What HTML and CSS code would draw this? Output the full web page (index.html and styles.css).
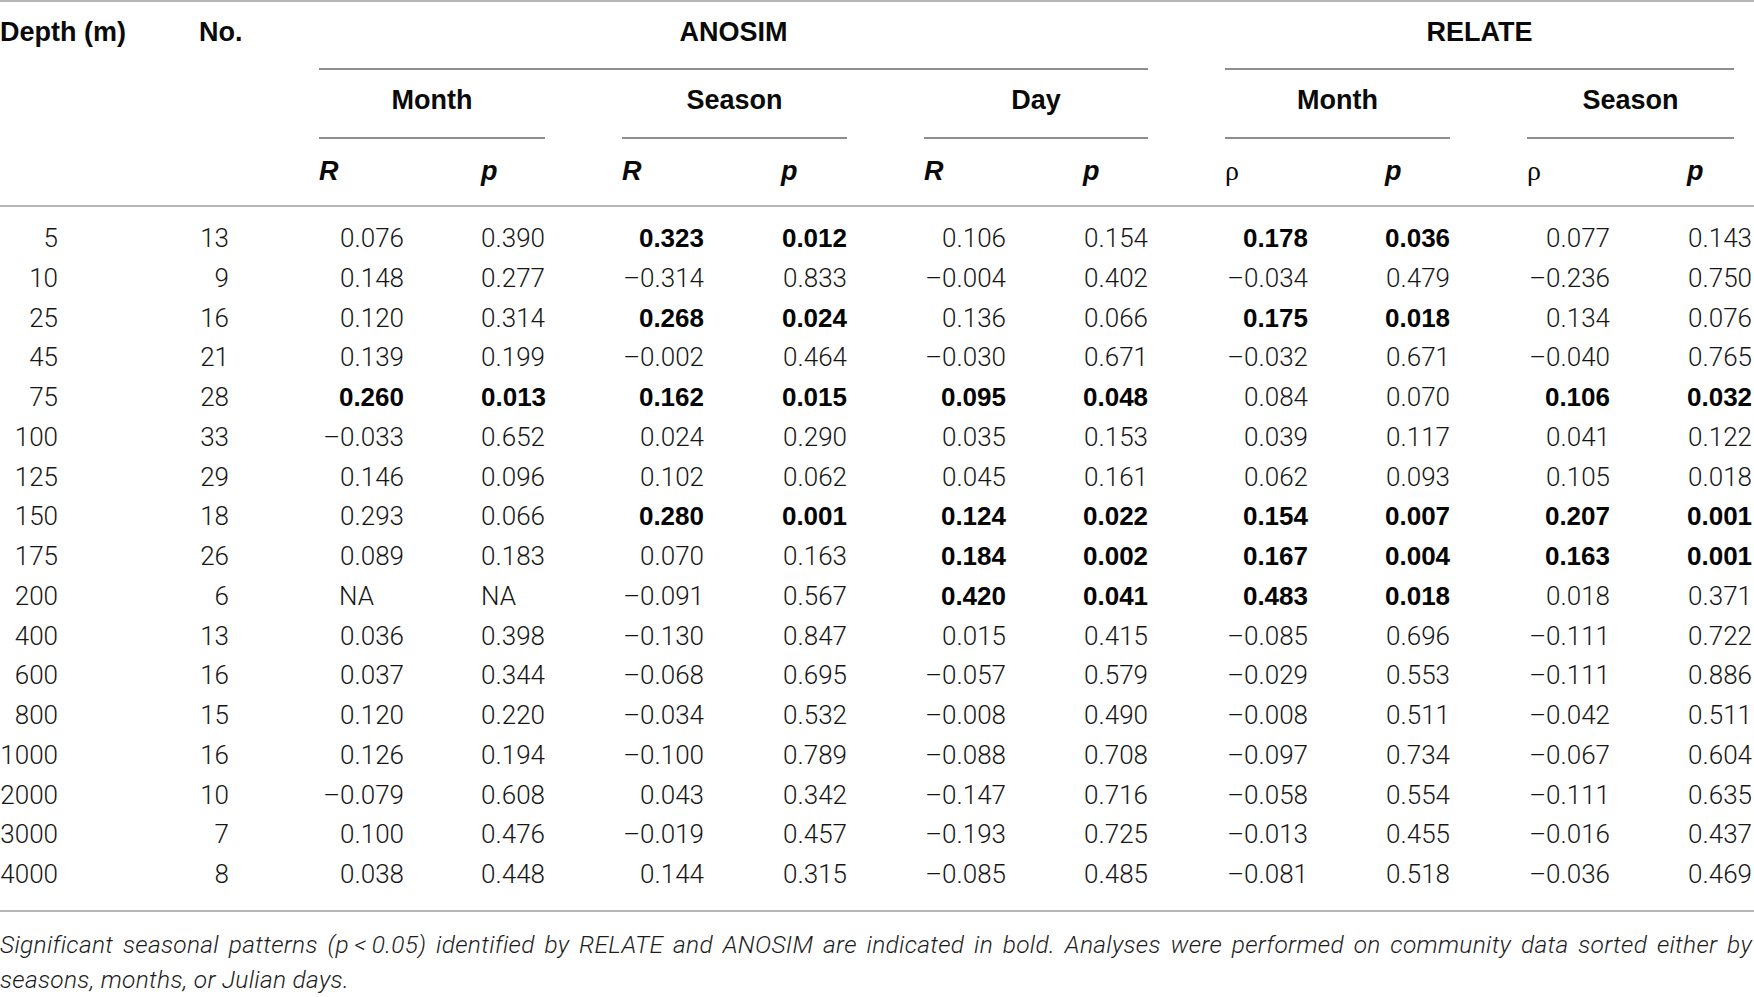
FILE: index.html
```html
<!DOCTYPE html>
<html lang="en">
<head>
<meta charset="utf-8">
<title>ANOSIM and RELATE results</title>
<link rel="stylesheet" href="styles.css">
</head>
<body>
<div class="table">
  <div class="grid head">
    <div class="rule r1"></div>
    <div class="hd row2 c1">Depth (m)</div>
    <div class="hd row2 c2">No.</div>
    <div class="hd row2 grp g-anosim">ANOSIM</div>
    <div class="hd row2 grp g-relate">RELATE</div>
    <div class="gline row3 g-anosim"></div>
    <div class="gline row3 g-relate trim"></div>
    <div class="hd row4 grp s1">Month</div>
    <div class="hd row4 grp s2">Season</div>
    <div class="hd row4 grp s3">Day</div>
    <div class="hd row4 grp s4">Month</div>
    <div class="hd row4 grp s5">Season</div>
    <div class="gline row5 s1"></div>
    <div class="gline row5 s2"></div>
    <div class="gline row5 s3"></div>
    <div class="gline row5 s4"></div>
    <div class="gline row5 s5 trim"></div>
    <div class="hd row6 it c3">R</div>
    <div class="hd row6 it c4">p</div>
    <div class="hd row6 it c5">R</div>
    <div class="hd row6 it c6">p</div>
    <div class="hd row6 it c7">R</div>
    <div class="hd row6 it c8">p</div>
    <div class="hd row6 rho c9">ρ</div>
    <div class="hd row6 it c10">p</div>
    <div class="hd row6 rho c11">ρ</div>
    <div class="hd row6 it c12">p</div>
    <div class="rule r7"></div>
  </div>

  <div class="grid body">
    <div class="depth">5</div><div class="no">13</div><div>0.076</div><div>0.390</div><div class="b">0.323</div><div class="b">0.012</div><div>0.106</div><div>0.154</div><div class="b">0.178</div><div class="b">0.036</div><div>0.077</div><div class="last">0.143</div>
    <div class="depth">10</div><div class="no">9</div><div>0.148</div><div>0.277</div><div>–0.314</div><div>0.833</div><div>–0.004</div><div>0.402</div><div>–0.034</div><div>0.479</div><div>–0.236</div><div class="last">0.750</div>
    <div class="depth">25</div><div class="no">16</div><div>0.120</div><div>0.314</div><div class="b">0.268</div><div class="b">0.024</div><div>0.136</div><div>0.066</div><div class="b">0.175</div><div class="b">0.018</div><div>0.134</div><div class="last">0.076</div>
    <div class="depth">45</div><div class="no">21</div><div>0.139</div><div>0.199</div><div>–0.002</div><div>0.464</div><div>–0.030</div><div>0.671</div><div>–0.032</div><div>0.671</div><div>–0.040</div><div class="last">0.765</div>
    <div class="depth">75</div><div class="no">28</div><div class="b">0.260</div><div class="b">0.013</div><div class="b">0.162</div><div class="b">0.015</div><div class="b">0.095</div><div class="b">0.048</div><div>0.084</div><div>0.070</div><div class="b">0.106</div><div class="b last">0.032</div>
    <div class="depth">100</div><div class="no">33</div><div>–0.033</div><div>0.652</div><div>0.024</div><div>0.290</div><div>0.035</div><div>0.153</div><div>0.039</div><div>0.117</div><div>0.041</div><div class="last">0.122</div>
    <div class="depth">125</div><div class="no">29</div><div>0.146</div><div>0.096</div><div>0.102</div><div>0.062</div><div>0.045</div><div>0.161</div><div>0.062</div><div>0.093</div><div>0.105</div><div class="last">0.018</div>
    <div class="depth">150</div><div class="no">18</div><div>0.293</div><div>0.066</div><div class="b">0.280</div><div class="b">0.001</div><div class="b">0.124</div><div class="b">0.022</div><div class="b">0.154</div><div class="b">0.007</div><div class="b">0.207</div><div class="b last">0.001</div>
    <div class="depth">175</div><div class="no">26</div><div>0.089</div><div>0.183</div><div>0.070</div><div>0.163</div><div class="b">0.184</div><div class="b">0.002</div><div class="b">0.167</div><div class="b">0.004</div><div class="b">0.163</div><div class="b last">0.001</div>
    <div class="depth">200</div><div class="no">6</div><div><span class="na">NA</span></div><div><span class="na">NA</span></div><div>–0.091</div><div>0.567</div><div class="b">0.420</div><div class="b">0.041</div><div class="b">0.483</div><div class="b">0.018</div><div>0.018</div><div class="last">0.371</div>
    <div class="depth">400</div><div class="no">13</div><div>0.036</div><div>0.398</div><div>–0.130</div><div>0.847</div><div>0.015</div><div>0.415</div><div>–0.085</div><div>0.696</div><div>–0.111</div><div class="last">0.722</div>
    <div class="depth">600</div><div class="no">16</div><div>0.037</div><div>0.344</div><div>–0.068</div><div>0.695</div><div>–0.057</div><div>0.579</div><div>–0.029</div><div>0.553</div><div>–0.111</div><div class="last">0.886</div>
    <div class="depth">800</div><div class="no">15</div><div>0.120</div><div>0.220</div><div>–0.034</div><div>0.532</div><div>–0.008</div><div>0.490</div><div>–0.008</div><div>0.511</div><div>–0.042</div><div class="last">0.511</div>
    <div class="depth">1000</div><div class="no">16</div><div>0.126</div><div>0.194</div><div>–0.100</div><div>0.789</div><div>–0.088</div><div>0.708</div><div>–0.097</div><div>0.734</div><div>–0.067</div><div class="last">0.604</div>
    <div class="depth">2000</div><div class="no">10</div><div>–0.079</div><div>0.608</div><div>0.043</div><div>0.342</div><div>–0.147</div><div>0.716</div><div>–0.058</div><div>0.554</div><div>–0.111</div><div class="last">0.635</div>
    <div class="depth">3000</div><div class="no">7</div><div>0.100</div><div>0.476</div><div>–0.019</div><div>0.457</div><div>–0.193</div><div>0.725</div><div>–0.013</div><div>0.455</div><div>–0.016</div><div class="last">0.437</div>
    <div class="depth">4000</div><div class="no">8</div><div>0.038</div><div>0.448</div><div>0.144</div><div>0.315</div><div>–0.085</div><div>0.485</div><div>–0.081</div><div>0.518</div><div>–0.036</div><div class="last">0.469</div>
  </div>

  <p class="caption"><span class="cap-line">Significant seasonal patterns (p&thinsp;&lt;&thinsp;0.05) identified by RELATE and ANOSIM are indicated in bold. Analyses were performed on community data sorted either by</span> seasons, months, or Julian days.</p>
</div>
</body>
</html>
```

FILE: styles.css
```css
html, body {
  margin: 0;
  padding: 0;
  background: #ffffff;
}

body {
  color: #161616;
  font-family: Roboto, "Liberation Sans", sans-serif;
  width: 1754px;
  overflow: hidden;
}

.grid {
  display: grid;
  grid-template-columns: 122px 43px 85px 64px 82px 66px 82px 65px 83px 65px 83px 67px;
  column-gap: 77px;
}

/* ---------- header ---------- */
.head {
  grid-template-rows: 2px 66px 2px 67px 2px 66px 2px;
}

.rule {
  grid-column: 1 / -1;
  background: #b6b6b6;
}
.r1 { grid-row: 1; }
.r7 { grid-row: 7; }

.gline {
  background: #8e8e8e;
  height: 2px;
}
.gline.trim { margin-right: 20px; }

.hd {
  font-family: "Liberation Sans", Arial, sans-serif;
  font-weight: 700;
  font-size: 27px;
  line-height: 30px;
  padding-top: 15px;
  color: #0a0a0a;
  white-space: nowrap;
}
.grp { text-align: center; }
.grp.g-relate, .grp.s5 { padding-right: 20px; }

.row2 { grid-row: 2; }
.row3 { grid-row: 3; }
.row4 { grid-row: 4; }
.row5 { grid-row: 5; }
.row6 { grid-row: 6; padding-top: 17px; }

.c1 { grid-column: 1; }
.c2 { grid-column: 2; }
.c3 { grid-column: 3; }
.c4 { grid-column: 4; }
.c5 { grid-column: 5; }
.c6 { grid-column: 6; }
.c7 { grid-column: 7; }
.c8 { grid-column: 8; }
.c9 { grid-column: 9; }
.c10 { grid-column: 10; }
.c11 { grid-column: 11; }
.c12 { grid-column: 12; }

.g-anosim { grid-column: 3 / 9; }
.g-relate { grid-column: 9 / 13; }
.s1 { grid-column: 3 / 5; }
.s2 { grid-column: 5 / 7; }
.s3 { grid-column: 7 / 9; }
.s4 { grid-column: 9 / 11; }
.s5 { grid-column: 11 / 13; }

.it {
  font-style: italic;
}
.rho {
  font-family: "Liberation Serif", "Times New Roman", serif;
  font-weight: 400;
  font-size: 28px;
}

/* ---------- body ---------- */
.body {
  grid-auto-rows: 39.78px;
  padding: 12px 0 15px;
  border-bottom: 2px solid #b6b6b6;
}

.body > div {
  font-family: Roboto, "Liberation Sans", sans-serif;
  font-weight: 300;
  font-size: 26px;
  line-height: 39.78px;
  text-align: right;
  white-space: nowrap;
}

.body > .depth { padding-right: 64px; }
.body > .no { padding-right: 13px; }
.body > .last { padding-right: 2px; }

.body > .b {
  font-family: "Liberation Sans", Arial, sans-serif;
  font-weight: 700;
  color: #050505;
}

.na {
  display: inline-block;
  width: 2.5em;
  text-align: left;
}

/* ---------- caption ---------- */
.caption {
  margin: 15px 2px 0 0;
  font-family: Roboto, "Liberation Sans", sans-serif;
  font-style: italic;
  font-weight: 300;
  font-size: 24.5px;
  letter-spacing: 0.3px;
  line-height: 35px;
  color: #1c1c1c;
}

.cap-line {
  display: block;
  text-align: justify;
  text-align-last: justify;
}
```
